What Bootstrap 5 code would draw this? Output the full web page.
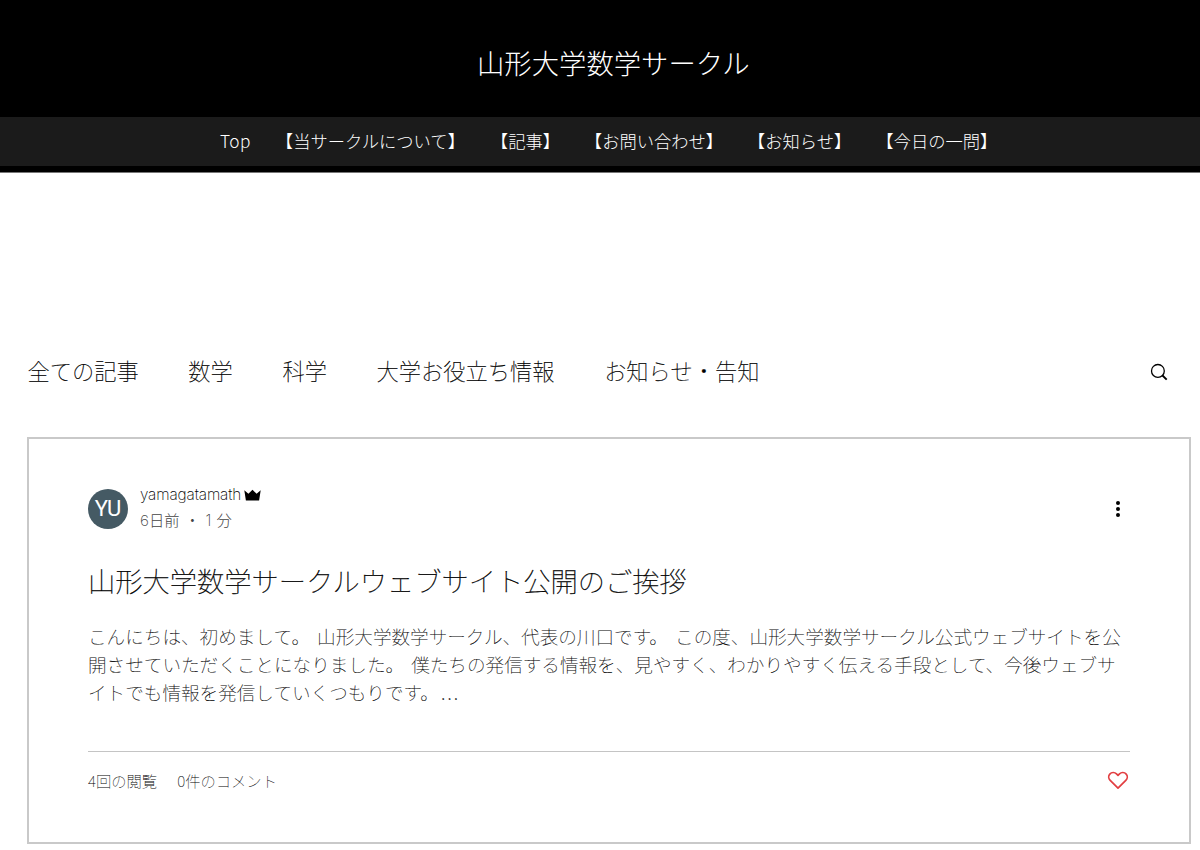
<!DOCTYPE html>
<html lang="ja">
<head>
<meta charset="utf-8">
<meta name="viewport" content="width=device-width, initial-scale=1">
<title>山形大学数学サークル</title>
<link href="https://cdn.jsdelivr.net/npm/bootstrap@5.3.0/dist/css/bootstrap.min.css" rel="stylesheet">
<style>
body{font-family:"Noto Sans CJK JP",sans-serif;font-weight:300;background:#fff;color:#000;overflow:hidden;height:850px}
a{color:inherit;text-decoration:none;white-space:nowrap}
.site-head{height:173px;background:#000;color:#fff;border-bottom:1px solid #777}
.site-title{height:117px;font-size:27.35px;line-height:40px;padding:42px 0 0 477px;font-weight:300;margin:0}
.site-nav{height:49px;background:#1b1b1b;padding-left:220px;font-size:17.3px;font-feature-settings:"halt";line-height:48px}
.site-nav .nav-item{flex:none}
.site-nav .nav-item:first-child{letter-spacing:.4px}
.cats{margin:180px 0 0 27.5px;height:38px;gap:49.6px;font-size:22.25px;line-height:38px;font-weight:100;-webkit-text-stroke:.2px #000}
.cats a{margin-top:-4px}
.cats svg{margin:0 32px 0 auto}
.post{margin:46px 9px 0 27px;height:407px;border:2px solid #c9c9c9;padding:47px 59px 0;font-weight:100}
.avatar{width:40px;height:40px;background:#455a64;color:#fff;font:400 22px/40px Roboto,sans-serif;margin-right:12px}
.who{font:200 15.3px/20px Inter,"Noto Sans CJK JP",sans-serif;letter-spacing:-.1px;margin-top:-1px}
.who svg{margin-left:3px}
.when{font:200 15.3px/20px Inter,"Noto Sans CJK JP",sans-serif;color:#444;margin-top:6px;word-spacing:1px}
.post-title{font-size:27.25px;line-height:40px;font-weight:100;margin:29px 0 0;white-space:nowrap;-webkit-text-stroke:.25px #000}
.excerpt{font-size:18.6px;line-height:28px;margin:22px 0 0;white-space:nowrap;color:#000;word-spacing:3px;-webkit-text-stroke:.08px #000}
.dots{font-family:Inter,sans-serif;font-weight:200;font-size:23px;line-height:1;margin-left:1px}
.foot{border-top:1px solid #c4c4c4;margin-top:45px;padding-top:16px;font-size:15.3px;line-height:24px;color:#000;gap:20px}
</style>
</head>
<body>
<header class="site-head">
  <h1 class="site-title">山形大学数学サークル</h1>
  <nav class="site-nav">
    <ul class="nav flex-nowrap">
      <li class="nav-item" style="width:64.5px"><a href="#">Top</a></li>
      <li class="nav-item" style="width:215px"><a href="#">【当サークルについて】</a></li>
      <li class="nav-item" style="width:94px"><a href="#">【記事】</a></li>
      <li class="nav-item" style="width:163px"><a href="#">【お問い合わせ】</a></li>
      <li class="nav-item" style="width:128.5px"><a href="#">【お知らせ】</a></li>
      <li class="nav-item"><a href="#">【今日の一問】</a></li>
    </ul>
  </nav>
</header>
<main>
  <div class="cats d-flex align-items-center">
    <a href="#">全ての記事</a><a href="#">数学</a><a href="#">科学</a><a href="#">大学お役立ち情報</a><a href="#">お知らせ・告知</a>
    <svg width="18" height="18" viewBox="0 0 18 18" fill="none" stroke="#000"><circle cx="7.9" cy="7.9" r="6.4" stroke-width="1.3"/><path d="M12.5 12.5 16.7 16.7" stroke-width="1.9"/></svg>
  </div>
  <article class="post">
    <div class="d-flex align-items-center">
      <div class="avatar rounded-circle text-center flex-shrink-0">YU</div>
      <div>
        <div class="who d-flex align-items-center"><span>yamagatamath</span><svg width="17" height="12" viewBox="0 0 17 12"><path d="M.3 1.2 4.4 4.7 8.5.8l4.1 3.9 4.1-3.5-1.6 10.3H1.9Z"/></svg></div>
        <div class="when">6日前 ・ 1 分</div>
      </div>
      <svg class="ms-auto" width="24" height="24" viewBox="0 0 24 24"><circle cx="12" cy="6" r="2"/><circle cx="12" cy="12" r="2"/><circle cx="12" cy="18" r="2"/></svg>
    </div>
    <h2 class="post-title">山形大学数学サークルウェブサイト公開のご挨拶</h2>
    <p class="excerpt">こんにちは、初めまして。 山形大学数学サークル、代表の川口です。 この度、山形大学数学サークル公式ウェブサイトを公<br>開させていただくことになりました。 僕たちの発信する情報を、見やすく、わかりやすく伝える手段として、今後ウェブサ<br>イトでも情報を発信していくつもりです。<span class="dots">…</span></p>
    <div class="foot d-flex align-items-center">
      <span>4回の閲覧</span><span>0件のコメント</span>
      <svg class="ms-auto" width="24" height="24" viewBox="0 0 24 24" fill="none" stroke="#e23f42" stroke-width="1.7" stroke-linejoin="round"><path d="M12 20.2 4.2 12.4C2.4 10.6 2.2 7.9 3.8 6.1 5.6 4.1 8.6 4 10.5 5.8L12 7.3l1.5-1.5c1.9-1.8 4.9-1.7 6.7.3 1.6 1.8 1.4 4.5-.4 6.3Z"/></svg>
    </div>
  </article>
</main>
<script src="https://cdn.jsdelivr.net/npm/bootstrap@5.3.0/dist/js/bootstrap.bundle.min.js"></script>
</body>
</html>
